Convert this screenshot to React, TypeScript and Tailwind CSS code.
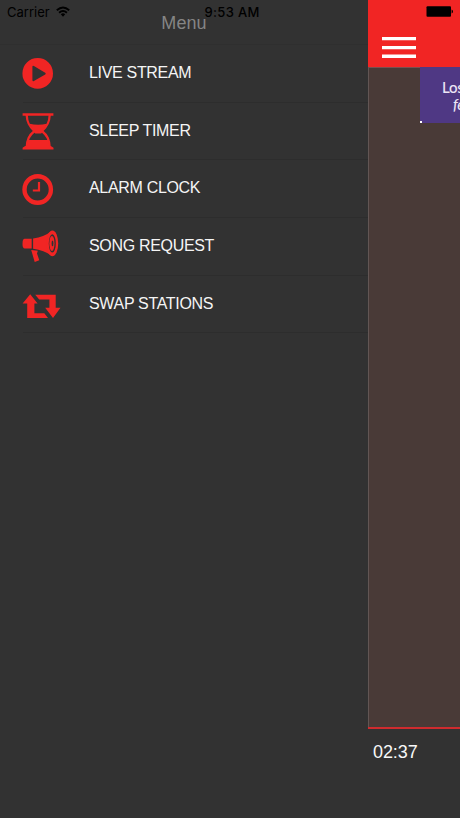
import type { ReactNode } from "react"

const PlayIcon = () => (
  <svg className="h-10 w-10" viewBox="20 53.500 40 40" fill="#f12524">
    <path
      fillRule="evenodd"
      d="M37.700 58.600a15.300 15.300 0 1 1 0 30.600a15.300 15.300 0 0 1 0-30.600zM32.400 67.200V80.600Q32.400 82.200 33.900 81.400L45.200 75Q46.400 74.100 45.200 73.200L33.900 66.400Q32.400 65.600 32.400 67.200z"
    />
  </svg>
)

const HourglassIcon = () => (
  <svg className="h-10 w-10" viewBox="20 111.500 40 40" fill="#f12524">
    <path d="M22.600 113.800h30.800v2.400H22.600zM25.200 146.600h25.600l2.700 1.600v1.700H22.600v-1.700z" />
    <path
      d="M26.700 115.500C27 123 29 127 34.500 131.500C29 136 27 140 26.700 148M49.700 115.500C49.400 123 47.400 127 41.900 131.500C47.400 136 49.400 140 49.700 148"
      fill="none"
      stroke="#f12524"
      strokeWidth="2.300"
    />
    <path d="M29.400 124.200Q38.200 126.200 47 124.200Q45 128 41.500 131.800H34.900Q31.400 128 29.400 124.200z" />
    <path d="M34 129.500h8.400l.8 2.300-2 2.200h-6l-2-2.200z" />
    <path d="M28 140.600H48.400L49.700 148H26.700z" />
  </svg>
)

const ClockIcon = () => (
  <svg className="h-10 w-10" viewBox="20 169 40 40" fill="none" stroke="#f12524">
    <circle cx="37.700" cy="189.500" r="13.200" strokeWidth="4.400" />
    <path d="M39 182v8.500h-6.200" strokeWidth="2.200" />
  </svg>
)

const MegaphoneIcon = () => (
  <svg className="h-10 w-10" viewBox="20 226.500 40 40" fill="#f12524">
    <path d="M24.700 239.300H31.700V249H24.700Q22.500 249 22.500 244.200T24.700 239.300z" />
    <path d="M33.100 239.100Q44 237.500 52 231.200V256.500Q44 250.600 33.100 249.300z" />
    <ellipse cx="52.400" cy="243.900" rx="5.800" ry="12.800" />
    <ellipse cx="52.300" cy="243.900" rx="3.500" ry="9.200" fill="#323232" />
    <ellipse cx="51.900" cy="243.900" rx="2.600" ry="7.500" />
    <ellipse cx="52.500" cy="243.900" rx=".9" ry="2.800" fill="#323232" />
    <path d="M31.200 250.600L37.800 251.200L37 254L39.300 260.700L34.700 262.400z" />
  </svg>
)

const SwapIcon = () => (
  <svg className="h-10 w-10" viewBox="20 284 40 40" fill="#f12524" overflow="visible">
    <path d="M30.200 294.300L37.600 303.500H34.400V313.200H44.300L48 318H27.200V303.500H22.600z" />
    <path d="M35.200 294.700H55.700V307.700H60.500L53 318L45.200 307.700H49.400V299.500H39.200z" />
  </svg>
)

const menuItems: { label: string; icon: ReactNode }[] = [
  { label: "LIVE STREAM", icon: <PlayIcon /> },
  { label: "SLEEP TIMER", icon: <HourglassIcon /> },
  { label: "ALARM CLOCK", icon: <ClockIcon /> },
  { label: "SONG REQUEST", icon: <MegaphoneIcon /> },
  { label: "SWAP STATIONS", icon: <SwapIcon /> },
]

function StatusBar() {
  return (
    <div className="absolute inset-x-0 top-0 z-10 flex h-[25px] items-center px-[7px] text-black">
      <span className="w-[43px] font-['Inter'] text-[13px]">Carrier</span>
      <svg className="ml-[6px] h-[11px] w-[14px] -translate-y-px" viewBox="0 0 14 11" fill="none" stroke="black" strokeWidth="1.900">
        <path d="M.8 4.200Q7-1.400 13.200 4.200M3.100 6.700Q7 3.200 10.900 6.700" />
        <path d="M4.800 8.200Q7 6.500 9.200 8.200L7 10.700z" fill="black" stroke="none" />
      </svg>
      <span className="absolute left-[204.500px] font-['Inter'] text-[13px] font-medium tracking-[0.350px] whitespace-nowrap">
        9:53 AM
      </span>
      <svg className="ml-auto h-[11px] w-[27px] -translate-y-px" viewBox="0 0 27 11">
        <rect x=".5" y=".2" width="24.500" height="10.600" rx="1" />
        <path d="M25.600 3.500Q27 4 27 5.500T25.600 7.500z" />
      </svg>
    </div>
  )
}

export default function App() {
  return (
    <div className="relative flex h-[818px] w-[460px] overflow-hidden bg-[#323232] font-['Liberation_Sans',sans-serif]">
      <StatusBar />

      {/* Side menu */}
      <nav className="w-[368px] shrink-0">
        <h1 className="h-[45px] border-b border-[#2f2f2f] pt-[11px] text-center text-[18px] leading-6 tracking-[0.100px] text-[#858585]">
          Menu
        </h1>
        <ul>
          {menuItems.map((item) => (
            <li key={item.label} className="ml-[23px] flex h-[57.700px] items-center border-b border-[#2d2d2d]">
              <div className="-ml-[3px] w-[69px]">{item.icon}</div>
              <span className="pb-px text-[16px] tracking-[-0.320px] text-[#f5f5f5]">{item.label}</span>
            </li>
          ))}
        </ul>
      </nav>

      {/* Player, pushed to the right by the menu */}
      <main className="flex w-[92px] flex-col">
        <header className="h-[67px] bg-[#f12524] pt-[37px] pl-[14px]">
          <svg className="h-[22px] w-[34px]" viewBox="0 0 34 22" fill="white">
            <path d="M0 0h34v3.300H0zM0 8.900h34v3.300H0zM0 17.600h34v3.300H0z" />
          </svg>
        </header>
        <div className="flex h-[660px] items-start justify-end border-t border-l border-t-[#795050] border-l-[#625654] bg-[#493a37]">
          <div className="relative -mt-px h-[56px] w-10 overflow-hidden bg-[#4f3884] pt-[12px] pl-[22px] font-['Lato'] text-[15px] leading-[17px] font-medium tracking-[-0.300px] whitespace-nowrap text-[#ece5f5]">
            <div>Los</div>
            <div className="pl-[11px] italic">fe</div>
            <div className="absolute bottom-0 left-0 size-[2px] bg-white" />
          </div>
        </div>
        <footer className="flex-1 border-t-[2px] border-[#cf2b2e] pt-[11px] pl-[5px] text-[18px] leading-6 tracking-[-0.100px] text-[#f8f8f8]">
          02:37
        </footer>
      </main>
    </div>
  )
}
